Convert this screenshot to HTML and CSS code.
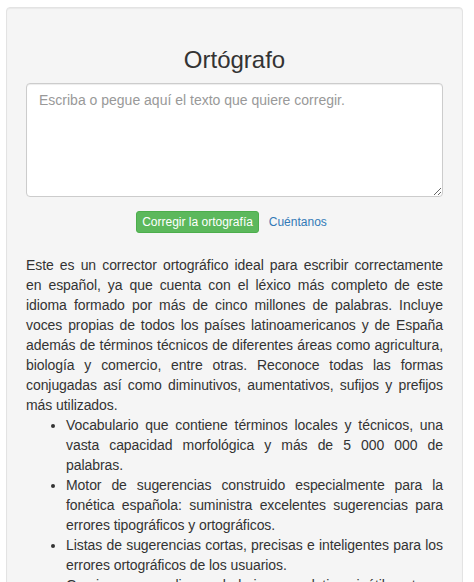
FILE: index.html
```html
<!DOCTYPE html>
<html lang="es">
<head>
<meta charset="utf-8">
<title>Ortógrafo</title>
<link rel="stylesheet" href="styles.css">
</head>
<body>
<div class="page">
  <div class="well">
    <h3 class="title">Ortógrafo</h3>
    <form class="form">
      <div class="form-group">
        <textarea class="form-control" rows="5" placeholder="Escriba o pegue aquí el texto que quiere corregir."></textarea>
      </div>
      <div class="actions">
        <button type="button" class="btn btn-success">Corregir la ortografía</button>
        <a class="btn btn-link" href="#">Cuéntanos</a>
      </div>
    </form>
    <div class="intro">
      Este es un corrector ortográfico ideal para escribir correctamente en español, ya que cuenta con el léxico más completo de este idioma formado por más de cinco millones de palabras. Incluye voces propias de todos los países latinoamericanos y de España además de términos técnicos de diferentes áreas como agricultura, biología y comercio, entre otras. Reconoce todas las formas conjugadas así como diminutivos, aumentativos, sufijos y prefijos más utilizados.
    </div>
    <ul class="features">
      <li>Vocabulario que contiene términos locales y técnicos, una vasta capacidad morfológica y más de 5 000 000 de palabras.</li>
      <li>Motor de sugerencias construido especialmente para la fonética española: suministra excelentes sugerencias para errores tipográficos y ortográficos.</li>
      <li>Listas de sugerencias cortas, precisas e inteligentes para los errores ortográficos de los usuarios.</li>
      <li>Gracias a su amplio vocabulario no se detiene inútilmente en palabras correctas, lo que le permite revisar textos de manera rápida y eficiente.</li>
    </ul>
  </div>
</div>
</body>
</html>
```
FILE: styles.css
```css
* { box-sizing: border-box; }
html, body { margin: 0; padding: 0; }
body {
  font-family: "Liberation Sans", Arial, Helvetica, sans-serif;
  font-size: 14px;
  line-height: 1.42857143;
  color: #333;
  background: #fff;
}
.page {
  padding: 7px 11px 0 6px;
}
.well {
  min-height: 20px;
  padding: 19px;
  margin-bottom: 20px;
  background-color: #f5f5f5;
  border: 1px solid #e3e3e3;
  border-radius: 4px;
  box-shadow: inset 0 1px 1px rgba(0,0,0,.05);
}
.title {
  margin: 20px 0 10px;
  font-size: 24px;
  font-weight: 500;
  line-height: 1.1;
  text-align: center;
  color: #333;
}
.form { margin: 0; }
.form-group { margin-bottom: 13px; }
.form-control {
  display: block;
  width: 100%;
  height: auto;
  padding: 6px 12px;
  font-family: inherit;
  font-size: 14px;
  line-height: 1.42857143;
  color: #555;
  background-color: #fff;
  border: 1px solid #ccc;
  border-radius: 4px;
  box-shadow: inset 0 1px 1px rgba(0,0,0,.075);
  resize: vertical;
  margin: 0;
}
.form-control::placeholder { color: #999; opacity: 1; }
.actions {
  text-align: center;
  margin-bottom: 22px;
}
.btn {
  display: inline-block;
  padding: 1px 5px;
  font-family: inherit;
  font-size: 12px;
  line-height: 1.5;
  border-radius: 3px;
  border: 1px solid transparent;
  vertical-align: middle;
  text-decoration: none;
  cursor: pointer;
  margin: 0;
}
.btn-success {
  color: #fff;
  background-color: #5cb85c;
  border-color: #4cae4c;
}
.btn-link {
  color: #337ab7;
  background: transparent;
}
.intro {
  text-align: justify;
  letter-spacing: -0.07px;
}
.features {
  margin: 0 0 10px;
  padding-left: 40px;
  text-align: justify;
  letter-spacing: -0.07px;
}
```
